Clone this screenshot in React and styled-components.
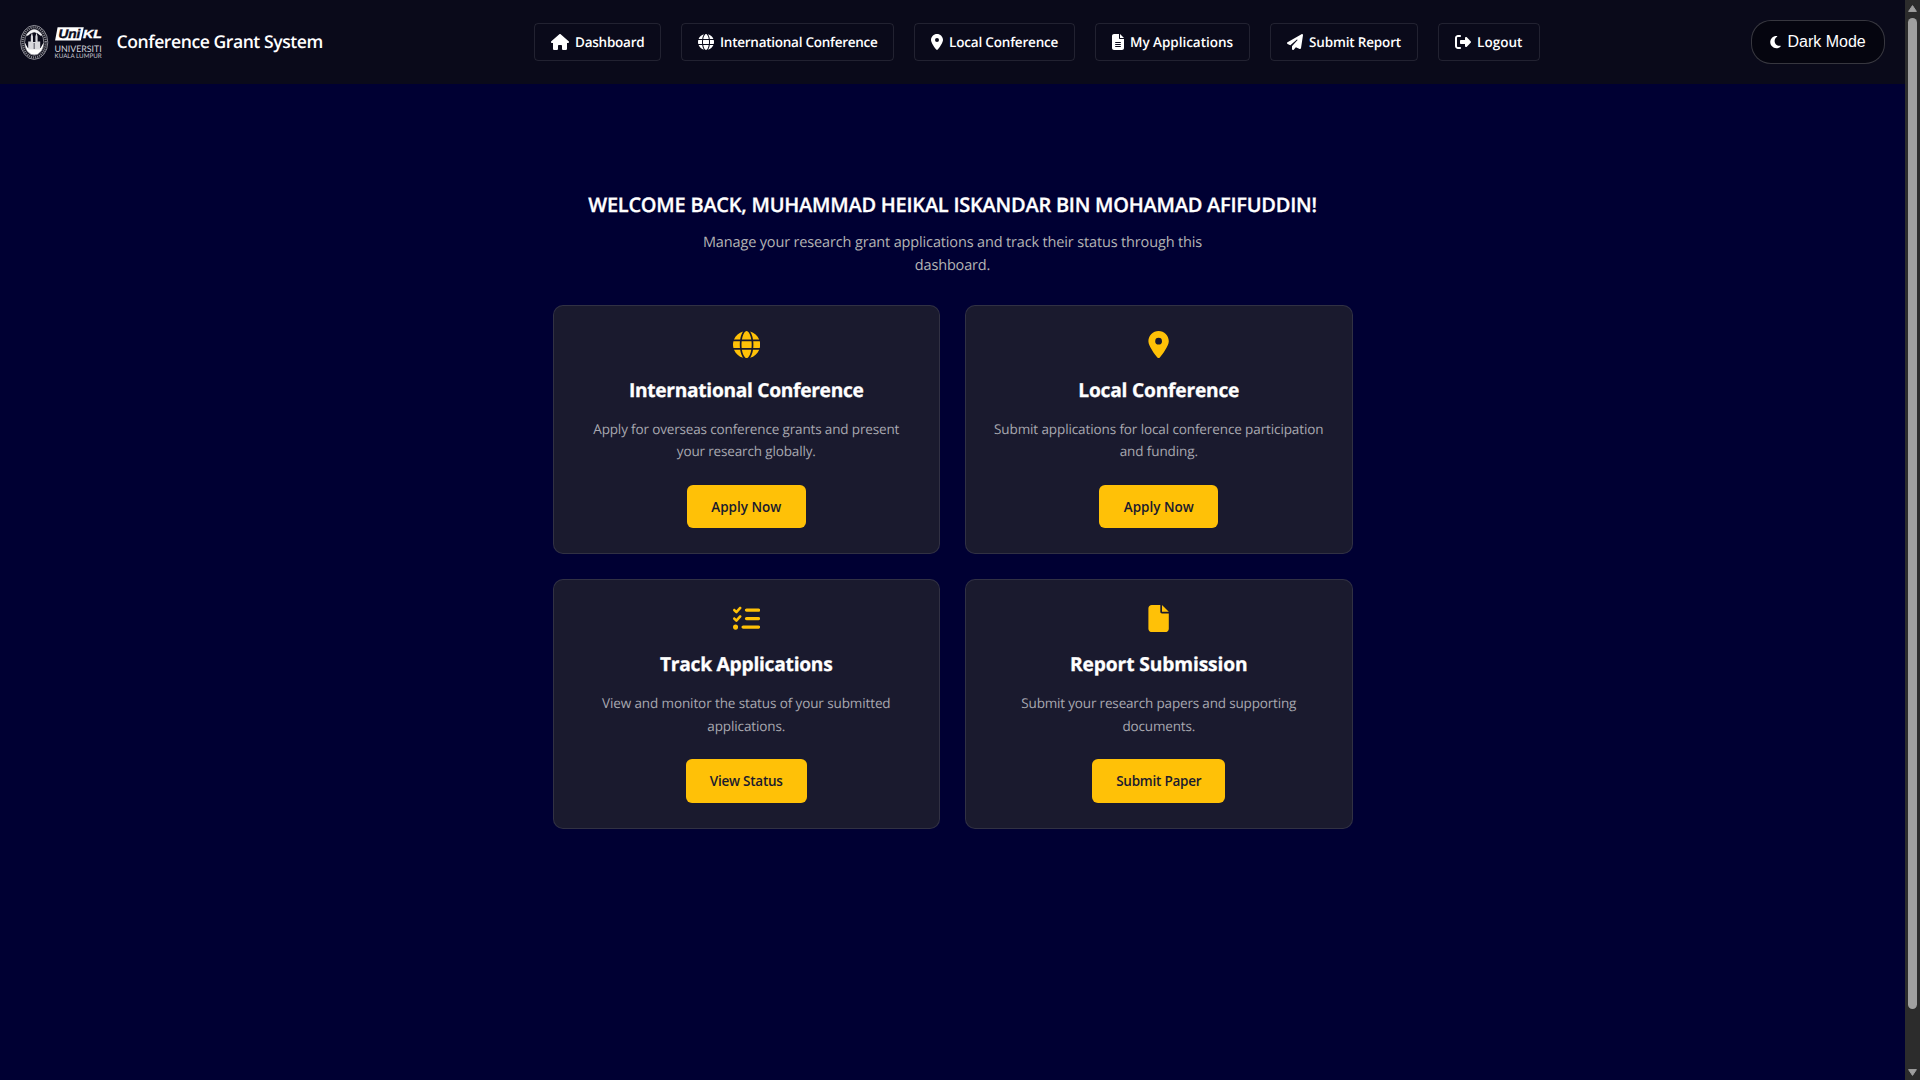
import React from "react";
import styled, { createGlobalStyle } from "styled-components";
import {
  FaHouse,
  FaGlobe,
  FaLocationDot,
  FaFileLines,
  FaPaperPlane,
  FaRightFromBracket,
  FaMoon,
  FaListCheck,
  FaFile,
} from "react-icons/fa6";

const GlobalStyle = createGlobalStyle`
  * { box-sizing: border-box; }
  body {
    margin: 0;
    background: #000033;
    color: #ffffff;
    font-family: "Open Sans", "Noto Sans", sans-serif;
    text-rendering: geometricPrecision;
    overflow: hidden;
  }
`;

const Window = styled.div`
  display: grid;
  grid-template-columns: 1fr 15px;
  height: 100vh;
`;

const Page = styled.div`
  display: flex;
  flex-direction: column;
  min-width: 0;
`;

const Header = styled.header`
  display: flex;
  align-items: center;
  justify-content: space-between;
  height: 84px;
  padding: 0 20px;
  background: #0a0a1a;
`;

const Brand = styled.div`
  display: flex;
  align-items: center;
  gap: 14.6px;
  width: 303px;
`;

const BrandName = styled.span`
  font-size: 17.6px;
  font-weight: 600;
  line-height: 24px;
  letter-spacing: -0.46px;
  white-space: nowrap;
`;

const Nav = styled.nav`
  display: flex;
  gap: 20px;
`;

const NavLink = styled.a`
  display: flex;
  align-items: center;
  gap: 6px;
  width: ${(p) => p.$width}px;
  height: 38px;
  padding-left: 16px;
  border: 1px solid rgba(255, 255, 255, 0.1);
  border-radius: 4px;
  font-size: 13.5px;
  font-weight: 600;
  letter-spacing: ${(p) => p.$track}px;
  white-space: nowrap;

  svg {
    width: ${(p) => p.$iconWidth}px;
    height: 16px;
    flex: none;
  }
`;

const ThemeToggle = styled.button`
  display: flex;
  align-items: center;
  gap: 6.5px;
  width: 134px;
  height: 44px;
  padding: 0 0 0 18px;
  border: 1px solid rgba(255, 255, 255, 0.2);
  border-radius: 20px;
  background: #05050f;
  color: #ffffff;
  font: 16px "Liberation Sans", Arial, sans-serif;
  white-space: nowrap;

  svg {
    width: 11px;
    height: 14px;
    flex: none;
  }
`;

const Main = styled.main`
  display: flex;
  flex-direction: column;
  align-items: center;
  padding-top: 106px;
`;

const Welcome = styled.h1`
  margin: 0 0 11.8px;
  font-size: 20px;
  font-weight: 600;
  line-height: 30px;
  letter-spacing: -0.24px;
  -webkit-text-stroke: 0.3px currentColor;
  white-space: nowrap;
`;

const Intro = styled.p`
  width: 520px;
  margin: 0 0 27.6px;
  color: #b4b4b4;
  font-size: 14.5px;
  line-height: 22.8px;
  letter-spacing: -0.15px;
  text-align: center;
`;

const Grid = styled.div`
  display: grid;
  grid-template-columns: 1fr 1fr;
  gap: 25px;
  width: 800px;
`;

const Card = styled.section`
  display: flex;
  flex-direction: column;
  align-items: center;
  padding: 25px;
  border: 1px solid rgba(255, 255, 255, 0.1);
  border-radius: 10px;
  background: #1a1a2e;
  text-align: center;

  > svg {
    width: 27.2px;
    height: 27.2px;
    color: #ffc107;
  }
`;

const CardTitle = styled.h2`
  margin: 16.4px 0 13.4px;
  font-size: 19.2px;
  font-weight: 700;
  line-height: 30px;
  letter-spacing: ${(p) => p.$track}px;
  -webkit-text-stroke: 0.3px currentColor;
`;

const CardText = styled.p`
  margin: 0 0 22px;
  color: #a8a8b0;
  font-size: 13.5px;
  line-height: 22.4px;
  letter-spacing: ${(p) => p.$track}px;
`;

const CardButton = styled.button`
  width: ${(p) => p.$width}px;
  height: 43.5px;
  padding: 0;
  border: 0;
  border-radius: 6px;
  background: #ffc107;
  color: #1a1a2e;
  font-family: inherit;
  font-size: 13.5px;
  font-weight: 600;
  letter-spacing: ${(p) => p.$track}px;
`;

const ScrollTrack = styled.div`
  display: flex;
  flex-direction: column;
  align-items: center;
  padding: 5px 0 4px;
  background: #2c2c2c;
`;

const ScrollThumb = styled.div`
  width: 9px;
  height: 991px;
  margin: 6px 0 auto;
  border-radius: 5px;
  background: #9f9f9f;
`;

function Crest() {
  return (
    <svg width="82" height="40" viewBox="0 0 82 40" aria-label="UniKL">
      <ellipse cx="14.2" cy="20.4" rx="13.6" ry="17" fill="#14141f" stroke="#a9a9b2" strokeWidth="0.8" />
      <ellipse cx="14.2" cy="20.4" rx="11.6" ry="15" fill="none" stroke="#8b8b95" strokeWidth="2.2" strokeDasharray="1 1.1" />
      <ellipse cx="14.2" cy="20.4" rx="9.6" ry="12.8" fill="#0a0a1a" stroke="#b9b9c0" strokeWidth="0.7" />
      <path d="M6 13.2Q14.2 1.6 22.4 13.2L20.6 13.8Q14.2 6.6 7.8 13.8Z" fill="#f2f2f4" />
      <path d="M4.8 20.5Q5.2 31.6 14.2 32.8Q23.2 31.6 23.6 20.5L20.6 26H7.8Z" fill="#ffffff" />
      <path d="M8.2 27.5V19.5H10.8V14.5L11.9 10.5L13 14.5V20H15.4V14.5L16.5 10.5L17.6 14.5V19.5H20.2V27.5Z" fill="#d9d9de" />
      <path d="M13.6 21h1.2v6h-1.2Z" fill="#666672" />
      <path d="M37.6 5.3H63.8L60.8 18.6H35.1Z" fill="#ffffff" />
      <text x="38.4" y="16.3" fontFamily="Liberation Sans, Arial, sans-serif" fontWeight="700" fontStyle="italic" fontSize="12.5" fill="#0a0a1a" stroke="#0a0a1a" strokeWidth="0.4" textLength="22" lengthAdjust="spacingAndGlyphs">Uni</text>
      <text x="63" y="16.4" fontFamily="Liberation Sans, Arial, sans-serif" fontWeight="700" fontStyle="italic" fontSize="11.8" fill="#ffffff" stroke="#ffffff" strokeWidth="0.4" textLength="18.8" lengthAdjust="spacingAndGlyphs">KL</text>
      <text x="34.4" y="29.5" fontFamily="Lato, sans-serif" fontSize="9" fill="#d4d4da" textLength="47.4" lengthAdjust="spacingAndGlyphs">UNIVERSITI</text>
      <text x="34.6" y="35.6" fontFamily="Lato, sans-serif" fontSize="6.4" fill="#c4c4cc" textLength="47" lengthAdjust="spacingAndGlyphs">KUALA LUMPUR</text>
    </svg>
  );
}

const links = [
  { label: "Dashboard", icon: FaHouse, iconWidth: 18, width: 127, track: -0.24 },
  { label: "International Conference", icon: FaGlobe, iconWidth: 16, width: 213, track: -0.26 },
  { label: "Local Conference", icon: FaLocationDot, iconWidth: 12, width: 161, track: -0.18 },
  { label: "My Applications", icon: FaFileLines, iconWidth: 12, width: 155, track: -0.03 },
  { label: "Submit Report", icon: FaPaperPlane, iconWidth: 16, width: 148, track: -0.16 },
  { label: "Logout", icon: FaRightFromBracket, iconWidth: 16, width: 102, track: 0.05 },
];

const cards = [
  {
    icon: FaGlobe,
    title: "International Conference",
    titleTrack: -0.31,
    text: "Apply for overseas conference grants and present your research globally.",
    textTrack: -0.15,
    action: "Apply Now",
    actionWidth: 119,
    actionTrack: 0,
  },
  {
    icon: FaLocationDot,
    title: "Local Conference",
    titleTrack: -0.21,
    text: "Submit applications for local conference participation and funding.",
    textTrack: -0.11,
    action: "Apply Now",
    actionWidth: 119,
    actionTrack: 0,
  },
  {
    icon: FaListCheck,
    title: "Track Applications",
    titleTrack: -0.25,
    text: "View and monitor the status of your submitted applications.",
    textTrack: -0.11,
    action: "View Status",
    actionWidth: 121,
    actionTrack: -0.24,
  },
  {
    icon: FaFile,
    title: "Report Submission",
    titleTrack: -0.11,
    text: "Submit your research papers and supporting documents.",
    textTrack: -0.17,
    action: "Submit Paper",
    actionWidth: 133,
    actionTrack: -0.24,
  },
];

export default function App() {
  return (
    <>
      <GlobalStyle />
      <Window>
        <Page>
          <Header>
            <Brand>
              <Crest />
              <BrandName>Conference Grant System</BrandName>
            </Brand>
            <Nav>
              {links.map(({ label, icon: Icon, iconWidth, width, track }) => (
                <NavLink key={label} $width={width} $iconWidth={iconWidth} $track={track}>
                  <Icon />
                  <span>{label}</span>
                </NavLink>
              ))}
            </Nav>
            <ThemeToggle>
              <FaMoon />
              <span>Dark Mode</span>
            </ThemeToggle>
          </Header>
          <Main>
            <Welcome>WELCOME BACK, MUHAMMAD HEIKAL ISKANDAR BIN MOHAMAD AFIFUDDIN!</Welcome>
            <Intro>Manage your research grant applications and track their status through this dashboard.</Intro>
            <Grid>
              {cards.map(({ icon: Icon, ...card }) => (
                <Card key={card.title}>
                  <Icon />
                  <CardTitle $track={card.titleTrack}>{card.title}</CardTitle>
                  <CardText $track={card.textTrack}>{card.text}</CardText>
                  <CardButton $width={card.actionWidth} $track={card.actionTrack}>
                    {card.action}
                  </CardButton>
                </Card>
              ))}
            </Grid>
          </Main>
        </Page>
        <ScrollTrack>
          <svg width="9" height="7" viewBox="0 0 9 7">
            <path d="M4.5 0.6L8.4 6.4H0.6Z" fill="#9f9f9f" stroke="#9f9f9f" strokeLinejoin="round" />
          </svg>
          <ScrollThumb />
          <svg width="9" height="7" viewBox="0 0 9 7">
            <path d="M4.5 6.4L8.4 0.6H0.6Z" fill="#9f9f9f" stroke="#9f9f9f" strokeLinejoin="round" />
          </svg>
        </ScrollTrack>
      </Window>
    </>
  );
}
